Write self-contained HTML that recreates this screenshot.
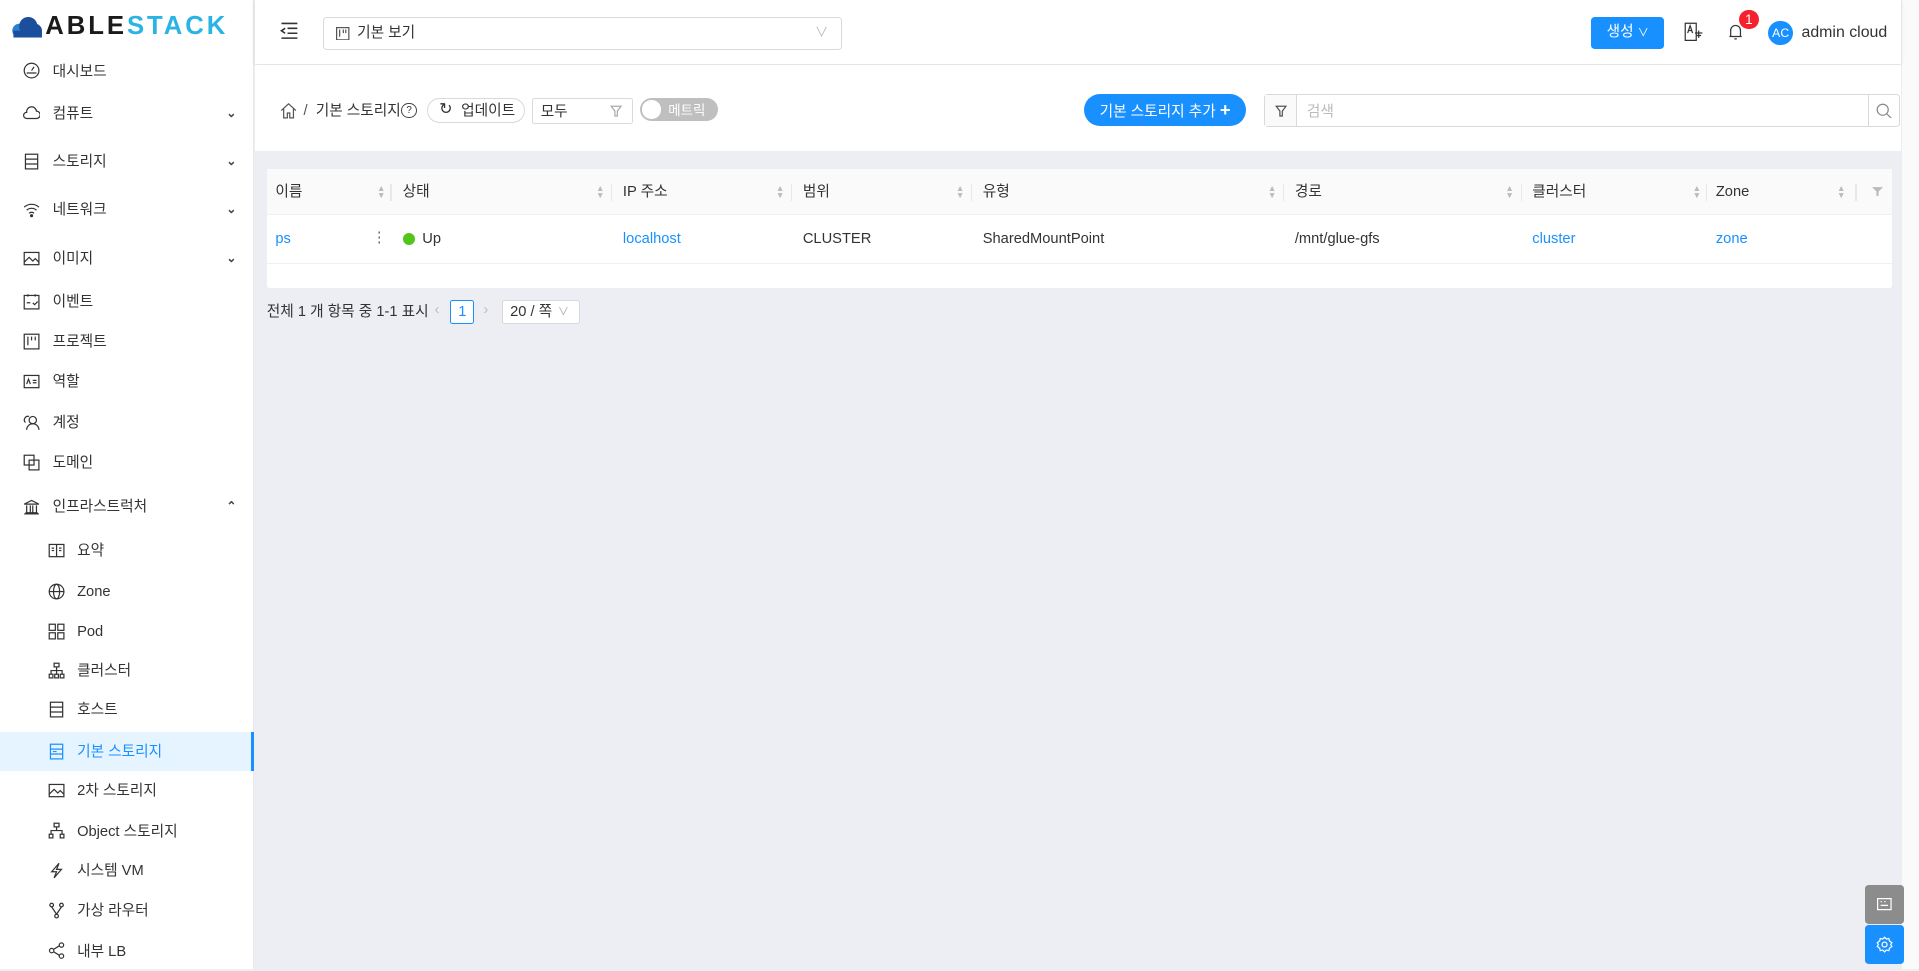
<!DOCTYPE html>
<html><head><meta charset="utf-8"><style>
html{zoom:1.22385}
body{margin:0;width:1568px;height:792px;overflow:hidden;font-family:"Liberation Sans","Noto Sans CJK KR",sans-serif;font-size:12px;line-height:14px;color:#333;background:#eceef3;position:relative}
.abs{position:absolute}
#side{left:0;top:0;width:207px;height:792px;background:#fff;border-right:1px solid #e8e8e8}
.mi{position:absolute;left:0;width:207px;height:32px;display:flex;align-items:center;color:#333;font-size:12px}
.mi svg{position:absolute;left:19px;width:14px;height:14px}
.mi span{position:absolute;left:43px;padding-top:2px}
.mi.sub svg{left:39px}.mi.sub span{left:63px}
.mi .ch{position:absolute;left:185px;font-size:10px;color:#444}
.mi.act{background:#e6f4ff;color:#1890ff;border-right:3px solid #1890ff;width:205px}
#hdr{left:208px;top:0;width:1345px;height:52px;background:#fff;box-shadow:0 1px 4px rgba(0,21,41,.08)}
#ph{left:208px;top:53px;width:1345px;height:70px;background:#fff}
.blue{color:#1890ff}
.sep{position:absolute;top:12px;width:1px;height:14px;background:#e8e8e8}
.sort{position:absolute;font-size:7px;color:#bbb;line-height:6px;top:13px}
</style></head><body>
<div id="side" class="abs">
  <svg class="abs" style="left:8px;top:12px" width="28" height="20" viewBox="0 0 30 20"><circle cx="8" cy="13" r="6" fill="#2a7fcf"/><circle cx="16" cy="9" r="8" fill="#1c4e9e"/><circle cx="22" cy="13" r="6" fill="#1c4e9e"/><rect x="3" y="13" width="25" height="6" fill="#1c4e9e"/></svg>
  <div class="abs" style="left:37px;top:10px;font-size:21px;font-weight:bold;letter-spacing:2.4px;line-height:24px"><span style="color:#1a1a1a">ABLE</span><span style="color:#2ab4e5">STACK</span></div>
  <div class="mi" style="top:42px"><svg viewBox="0 0 14 14" fill="none" stroke="#333"><circle cx="7" cy="7" r="6"/><path d="M7 7l2-3M3 9h8"/></svg><span>대시보드</span></div>
  <div class="mi" style="top:77px"><svg viewBox="0 0 14 14" fill="none" stroke="#333"><path d="M3 11h8a3 3 0 0 0 0-6 4 4 0 0 0-8 1 2.5 2.5 0 0 0 0 5z"/></svg><span>컴퓨트</span><b class="ch">⌄</b></div>
  <div class="mi" style="top:116px"><svg viewBox="0 0 14 14" fill="none" stroke="#333"><rect x="2" y="1" width="10" height="12"/><path d="M2 5h10M2 9h10"/></svg><span>스토리지</span><b class="ch">⌄</b></div>
  <div class="mi" style="top:155px"><svg viewBox="0 0 14 14" fill="none" stroke="#333"><path d="M1 5a9 9 0 0 1 12 0M3 7.5a6 6 0 0 1 8 0M5 10a3 3 0 0 1 4 0"/><circle cx="7" cy="12" r=".8" fill="#333"/></svg><span>네트워크</span><b class="ch">⌄</b></div>
  <div class="mi" style="top:195px"><svg viewBox="0 0 14 14" fill="none" stroke="#333"><rect x="1" y="2" width="12" height="10"/><path d="M1 10l4-4 3 3 2-2 3 3"/></svg><span>이미지</span><b class="ch">⌄</b></div>
  <div class="mi" style="top:230px"><svg viewBox="0 0 14 14" fill="none" stroke="#333"><rect x="1" y="2" width="12" height="11"/><path d="M4 1v2M10 1v2M3 8h3M8 8l1.5 1.5L12 7"/></svg><span>이벤트</span></div>
  <div class="mi" style="top:263px"><svg viewBox="0 0 14 14" fill="none" stroke="#333"><rect x="1" y="1" width="12" height="12"/><path d="M4 3v7M7 3v3M10 3v3"/></svg><span>프로젝트</span></div>
  <div class="mi" style="top:296px"><svg viewBox="0 0 14 14" fill="none" stroke="#333"><rect x="1" y="2" width="12" height="10"/><path d="M3 9l1.5-4L6 9M8 6h3M8 8h3"/></svg><span>역할</span></div>
  <div class="mi" style="top:329px"><svg viewBox="0 0 14 14" fill="none" stroke="#333"><circle cx="8" cy="5" r="3"/><path d="M3 13a5 5 0 0 1 10 0M5 2a3 3 0 0 0-3 5"/></svg><span>계정</span></div>
  <div class="mi" style="top:362px"><svg viewBox="0 0 14 14" fill="none" stroke="#333"><rect x="1" y="1" width="8" height="8"/><rect x="5" y="5" width="8" height="8"/></svg><span>도메인</span></div>
  <div class="mi" style="top:398px"><svg viewBox="0 0 14 14" fill="none" stroke="#333"><path d="M1 5l6-3 6 3zM2 12h10M3 6v6M6 6v6M8 6v6M11 6v6M1 13h12"/></svg><span>인프라스트럭처</span><b class="ch">⌃</b></div>
  <div class="mi sub" style="top:434px"><svg viewBox="0 0 14 14" fill="none" stroke="#333"><rect x="1" y="2" width="12" height="10"/><path d="M7 2v10M3 5h2M3 7h2M9 5h2M9 7h2"/></svg><span>요약</span></div>
  <div class="mi sub" style="top:467px"><svg viewBox="0 0 14 14" fill="none" stroke="#333"><circle cx="7" cy="7" r="6"/><ellipse cx="7" cy="7" rx="2.5" ry="6"/><path d="M1 7h12"/></svg><span>Zone</span></div>
  <div class="mi sub" style="top:500px"><svg viewBox="0 0 14 14" fill="none" stroke="#333"><rect x="1" y="1" width="5" height="5"/><rect x="8" y="1" width="5" height="5"/><rect x="1" y="8" width="5" height="5"/><rect x="8" y="8" width="5" height="5"/></svg><span>Pod</span></div>
  <div class="mi sub" style="top:532px"><svg viewBox="0 0 14 14" fill="none" stroke="#333"><rect x="5" y="1" width="4" height="3"/><rect x="1" y="10" width="3" height="3"/><rect x="5.5" y="10" width="3" height="3"/><rect x="10" y="10" width="3" height="3"/><path d="M7 4v6M2.5 10V7h9v3"/></svg><span>클러스터</span></div>
  <div class="mi sub" style="top:564px"><svg viewBox="0 0 14 14" fill="none" stroke="#333"><rect x="2" y="1" width="10" height="12"/><path d="M2 5h10M2 9h10"/></svg><span>호스트</span></div>
  <div class="mi sub act" style="top:598px"><svg viewBox="0 0 14 14" fill="none" stroke="#1890ff"><rect x="2" y="1" width="10" height="12"/><path d="M2 5h10M2 9h10M4 7h3"/></svg><span>기본 스토리지</span></div>
  <div class="mi sub" style="top:630px"><svg viewBox="0 0 14 14" fill="none" stroke="#333"><rect x="1" y="2" width="12" height="10"/><path d="M1 10l4-4 3 3 2-2 3 3"/></svg><span>2차 스토리지</span></div>
  <div class="mi sub" style="top:663px"><svg viewBox="0 0 14 14" fill="none" stroke="#333"><rect x="5" y="1" width="4" height="3"/><rect x="1" y="10" width="3" height="3"/><rect x="10" y="10" width="3" height="3"/><path d="M7 4v3M2.5 10V7h9v3"/></svg><span>Object 스토리지</span></div>
  <div class="mi sub" style="top:695px"><svg viewBox="0 0 14 14" fill="none" stroke="#333"><path d="M9 1L3 8h4l-2 5 6-7H7z"/></svg><span>시스템 VM</span></div>
  <div class="mi sub" style="top:728px"><svg viewBox="0 0 14 14" fill="none" stroke="#333"><circle cx="3" cy="2.5" r="1.5"/><circle cx="11" cy="2.5" r="1.5"/><circle cx="7" cy="11.5" r="1.5"/><path d="M3 4l4 6M11 4l-4 6"/></svg><span>가상 라우터</span></div>
  <div class="mi sub" style="top:761px"><svg viewBox="0 0 14 14" fill="none" stroke="#333"><circle cx="3" cy="7" r="1.8"/><circle cx="11" cy="2.5" r="1.8"/><circle cx="11" cy="11.5" r="1.8"/><path d="M4.5 6l5-3M4.5 8l5 3"/></svg><span>내부 LB</span></div>
</div>
<div class="abs" style="left:1553px;top:0;width:15px;height:792px;background:#fafafa;border-left:1px solid #eee"></div>
<div id="hdr" class="abs">
  <svg class="abs" style="left:20px;top:17px" width="16" height="16" viewBox="0 0 16 16" fill="none" stroke="#333" stroke-width="1.3"><path d="M2 2h13M7 6h8M7 10h8M2 14h13M5 6L2 8l3 2"/></svg>
  <div class="abs" style="left:56px;top:14px;width:422px;height:25px;border:1px solid #d9d9d9;border-radius:3px">
    <svg class="abs" style="left:10px;top:7px" width="11" height="11" viewBox="0 0 11 11" fill="none" stroke="#555"><rect x=".5" y=".5" width="10" height="10"/><path d="M3 2v6M6 2v3M8 2v3"/></svg>
    <span class="abs" style="left:27px;top:6px;color:#333">기본 보기</span>
    <span class="abs" style="right:10px;top:5px;color:#bbb;font-size:11px">∨</span>
  </div>
  <div class="abs" style="left:1092px;top:14px;width:60px;height:26px;background:#1890ff;border-radius:3px;color:#fff;line-height:26px;text-align:center">생성 <span style="font-size:9px">∨</span></div>
  <svg class="abs" style="left:1168px;top:18px" width="16" height="16" viewBox="0 0 16 16" fill="none" stroke="#333"><path d="M1 1h9v14H1zM3 9l2-6 2 6M4 7h2M9 9h6M12 7v6M10 11h4"/></svg>
  <svg class="abs" style="left:1203px;top:19px" width="14" height="15" viewBox="0 0 14 15" fill="none" stroke="#333"><path d="M3 11V6a4 4 0 0 1 8 0v5h1H2zM6 13h2"/></svg>
  <div class="abs" style="left:1213px;top:8px;width:16px;height:16px;border-radius:8px;background:#f5222d;color:#fff;text-align:center;font-size:11px;line-height:16px">1</div>
  <div class="abs" style="left:1237px;top:17px;width:20px;height:20px;border-radius:10px;background:#1890ff;color:#fff;font-size:10px;text-align:center;line-height:20px">AC</div>
  <span class="abs" style="left:1264px;top:20px;font-size:13px;color:#333">admin cloud</span>
</div>
<div id="ph" class="abs">
  <svg class="abs" style="left:21px;top:30px" width="14" height="14" viewBox="0 0 14 14" fill="none" stroke="#555"><path d="M1 7l6-5.5L13 7M3 5.5V13h3V9h2v4h3V5.5"/></svg>
  <span class="abs" style="left:40px;top:31px;color:#555">/</span>
  <span class="abs" style="left:50px;top:31px">기본 스토리지</span>
  <span class="abs" style="left:120px;top:31px;width:11px;height:11px;border:1px solid #444;border-radius:50%;font-size:8px;text-align:center;line-height:11px">?</span>
  <div class="abs" style="left:141px;top:27px;width:78px;height:19px;border:1px solid #d9d9d9;border-radius:11px"><span class="abs" style="left:9px;top:2px;font-size:13px">↻</span><span class="abs" style="left:27px;top:3px">업데이트</span></div>
  <div class="abs" style="left:227px;top:27px;width:81px;height:20px;border:1px solid #d9d9d9;border-radius:2px"><span class="abs" style="left:6px;top:4px">모두</span><svg class="abs" style="left:63px;top:5px" width="10" height="10" viewBox="0 0 10 10" fill="none" stroke="#aaa"><path d="M1 1h8L6 5v4H4V5z"/></svg></div>
  <div class="abs" style="left:315px;top:27px;width:64px;height:19px;background:#bfbfbf;border-radius:10px"><div class="abs" style="left:2px;top:2px;width:15px;height:15px;border-radius:50%;background:#fff"></div><span class="abs" style="left:23px;top:3px;color:#fff;font-size:11px">메트릭</span></div>
  <div class="abs" style="left:678px;top:24px;width:132px;height:26px;background:#1890ff;border-radius:14px;color:#fff;line-height:26px;text-align:center">기본 스토리지 추가 <b style="font-size:15px">+</b></div>
  <div class="abs" style="left:825px;top:24px;width:518px;height:25px;border:1px solid #d9d9d9;border-radius:3px;background:#fff">
    <div class="abs" style="left:0;top:0;width:25px;height:25px;background:#fafafa;border-right:1px solid #d9d9d9"><svg class="abs" style="left:8px;top:8px" width="10" height="10" viewBox="0 0 10 10" fill="none" stroke="#555"><path d="M1 1h8L6 5v4H4V5z"/></svg></div>
    <span class="abs" style="left:34px;top:7px;color:#bbb">검색</span>
    <div class="abs" style="right:0;top:0;width:25px;height:25px;border-left:1px solid #d9d9d9"><svg class="abs" style="left:6px;top:6px" width="13" height="13" viewBox="0 0 13 13" fill="none" stroke="#888"><circle cx="5.5" cy="5.5" r="4.5"/><path d="M9 9l3.5 3.5"/></svg></div>
  </div>
</div>
<div class="abs" style="left:218px;top:138px;width:1328px;height:97px;background:#fff;border-radius:2px">
  <div class="abs" style="left:0;top:0;width:1328px;height:37px;background:#fafafa;border-bottom:1px solid #f0f0f0">
    <span class="abs" style="left:7px;top:12px">이름</span><span class="sort" style="left:90px">▲<br>▼</span><span class="sep" style="left:101px"></span>
    <span class="abs" style="left:111px;top:12px">상태</span><span class="sort" style="left:269px">▲<br>▼</span><span class="sep" style="left:281px"></span>
    <span class="abs" style="left:291px;top:12px">IP 주소</span><span class="sort" style="left:416px">▲<br>▼</span><span class="sep" style="left:428px"></span>
    <span class="abs" style="left:438px;top:12px">범위</span><span class="sort" style="left:563px">▲<br>▼</span><span class="sep" style="left:575px"></span>
    <span class="abs" style="left:585px;top:12px">유형</span><span class="sort" style="left:818px">▲<br>▼</span><span class="sep" style="left:830px"></span>
    <span class="abs" style="left:840px;top:12px">경로</span><span class="sort" style="left:1012px">▲<br>▼</span><span class="sep" style="left:1025px"></span>
    <span class="abs" style="left:1034px;top:12px">클러스터</span><span class="sort" style="left:1165px">▲<br>▼</span><span class="sep" style="left:1176px"></span>
    <span class="abs" style="left:1184px;top:12px">Zone</span><span class="sort" style="left:1283px">▲<br>▼</span><span class="sep" style="left:1298px"></span>
    <svg class="abs" style="left:1312px;top:14px" width="9" height="9" viewBox="0 0 10 10" fill="#bbb"><path d="M0 1h10L6 5v4H4V5z"/></svg>
  </div>
  <div class="abs" style="left:0;top:38px;width:1328px;height:39px;border-bottom:1px solid #f0f0f0">
    <span class="abs blue" style="left:7px;top:13px">ps</span><span class="abs" style="left:86px;top:12px;color:#666">⋮</span>
    <span class="abs" style="left:111px;top:14px;width:10px;height:10px;border-radius:50%;background:#52c41a"></span><span class="abs" style="left:127px;top:13px">Up</span>
    <span class="abs blue" style="left:291px;top:13px">localhost</span>
    <span class="abs" style="left:438px;top:13px">CLUSTER</span>
    <span class="abs" style="left:585px;top:13px">SharedMountPoint</span>
    <span class="abs" style="left:840px;top:13px">/mnt/glue-gfs</span>
    <span class="abs blue" style="left:1034px;top:13px">cluster</span>
    <span class="abs blue" style="left:1184px;top:13px">zone</span>
  </div>
</div>
<span class="abs" style="left:218px;top:248px">전체 1 개 항목 중 1-1 표시</span>
<span class="abs" style="left:355px;top:247px;color:#bbb">‹</span>
<div class="abs" style="left:368px;top:245px;width:18px;height:18px;border:1px solid #1890ff;border-radius:2px;color:#1890ff;text-align:center;line-height:18px;background:#fff">1</div>
<span class="abs" style="left:395px;top:247px;color:#bbb">›</span>
<div class="abs" style="left:410px;top:245px;width:62px;height:18px;border:1px solid #d9d9d9;border-radius:2px;background:#fff"><span class="abs" style="left:6px;top:3px">20 / 쪽</span><span class="abs" style="left:45px;top:3px;color:#aaa;font-size:9px">∨</span></div>
<div class="abs" style="left:1524px;top:723px;width:32px;height:32px;background:#8c8c8c;border-radius:3px"><svg class="abs" style="left:10px;top:11px" width="12" height="10" viewBox="0 0 12 10" fill="none" stroke="#fff"><rect x=".5" y=".5" width="11" height="9"/><path d="M3 3h1M6 3h1M9 3h0M3 6h6"/></svg></div>
<div class="abs" style="left:1524px;top:756px;width:32px;height:32px;background:#1890ff;border-radius:3px"><svg class="abs" style="left:9px;top:9px" width="14" height="14" viewBox="0 0 14 14" fill="none" stroke="#fff"><circle cx="7" cy="7" r="2"/><path d="M7 1l1.5 1.5 2-.5.5 2L13 5.5 12 7l1 1.5-2 1.5-.5 2-2-.5L7 13l-1.5-1.5-2 .5-.5-2L1 8.5 2 7 1 5.5l2-1.5.5-2 2 .5z"/></svg></div>
</body></html>
